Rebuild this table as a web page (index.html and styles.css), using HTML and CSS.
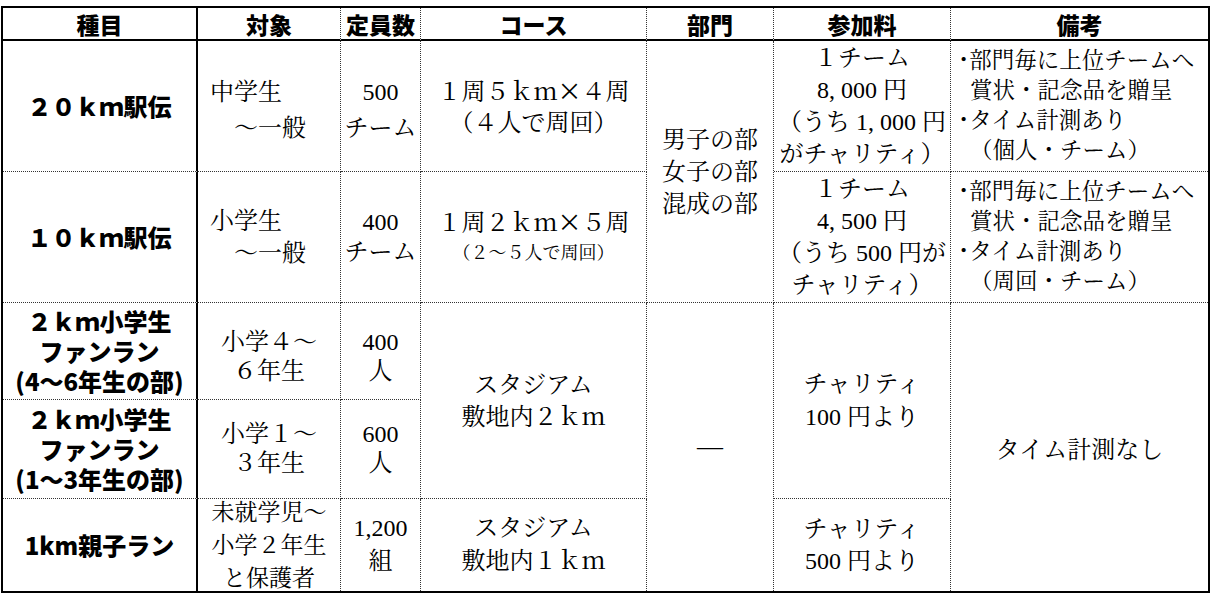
FILE: index.html
```html
<!DOCTYPE html>
<html lang="ja">
<head>
<meta charset="utf-8">
<title>種目一覧</title>
<link rel="stylesheet" href="styles.css">
</head>
<body>
<div class="grid">
  <div class="cell hd k"><div class="t">種目</div></div>
  <div class="cell hd"><div class="t">対象</div></div>
  <div class="cell hd"><div class="t">定員数</div></div>
  <div class="cell hd"><div class="t">コース</div></div>
  <div class="cell hd"><div class="t">部門</div></div>
  <div class="cell hd"><div class="t">参加料</div></div>
  <div class="cell hd last"><div class="t">備考</div></div>

  <div class="cell ev k"><div class="t">２０ｋｍ駅伝</div></div>
  <div class="cell left tall"><div class="t">中学生<br>　～一般</div></div>
  <div class="cell tall"><div class="t">500<br>チーム</div></div>
  <div class="cell lh31"><div class="t">１周５ｋｍ<span class="j">×</span>４周<br>（４人で周回）</div></div>
  <div class="cell span2"><div class="t">男子の部<br>女子の部<br>混成の部</div></div>
  <div class="cell"><div class="t">１チーム<br>8, 000 円<br>（うち 1, 000 円<br>がチャリティ）</div></div>
  <div class="cell notes last">
    <div class="item">･部門毎に上位チームへ<br>賞状・記念品を贈呈</div>
    <div class="item">･タイム計測あり<br>（個人・チーム）</div>
  </div>

  <div class="cell ev k"><div class="t">１０ｋｍ駅伝</div></div>
  <div class="cell left"><div class="t">小学生<br>　～一般</div></div>
  <div class="cell lh30"><div class="t">400<br>チーム</div></div>
  <div class="cell lh28"><div class="t">１周２ｋｍ<span class="j">×</span>５周<br><span class="small">（２～５人で周回）</span></div></div>
  <div class="cell"><div class="t">１チーム<br>4, 500 円<br>（うち 500 円が<br>チャリティ）</div></div>
  <div class="cell notes last">
    <div class="item">･部門毎に上位チームへ<br>賞状・記念品を贈呈</div>
    <div class="item">･タイム計測あり<br>（周回・チーム）</div>
  </div>

  <div class="cell ev k lh30"><div class="t">２ｋｍ小学生<br>ファンラン<br>(4～6年生の部)</div></div>
  <div class="cell lh29 down"><div class="t">小学４～<br>６年生</div></div>
  <div class="cell lh29 down"><div class="t">400<br>人</div></div>
  <div class="cell span2"><div class="t">スタジアム<br>敷地内２ｋｍ</div></div>
  <div class="cell span3 nb dash"><div class="t">—</div></div>
  <div class="cell span2 lh33"><div class="t">チャリティ<br>100 円より</div></div>
  <div class="cell span3 nb last down5"><div class="t">タイム計測なし</div></div>

  <div class="cell ev k lh30"><div class="t">２ｋｍ小学生<br>ファンラン<br>(1～3年生の部)</div></div>
  <div class="cell lh29"><div class="t">小学１～<br>３年生</div></div>
  <div class="cell lh29"><div class="t">600<br>人</div></div>

  <div class="cell ev k nb"><div class="t">1km親子ラン</div></div>
  <div class="cell nb lh33 f23"><div class="t">未就学児～<br>小学２年生<br>と保護者</div></div>
  <div class="cell nb lh33"><div class="t">1,200<br>組</div></div>
  <div class="cell nb lh33"><div class="t">スタジアム<br>敷地内１ｋｍ</div></div>
  <div class="cell nb"><div class="t">チャリティ<br>500 円より</div></div>
</div>
</body>
</html>
```

FILE: styles.css
```css
html, body {
  margin: 0;
  padding: 0;
  background: #ffffff;
}

.grid {
  margin: 6px 0 0 1px;
  width: 1209px;
  box-sizing: border-box;
  border: 2px solid #000;
  display: grid;
  grid-template-columns: 195px 143px 80px 226px 127px 177px 257px;
  grid-template-rows: 33px 131px 131px 97px 99px 92px;
}

.cell {
  border-right: 1px dotted #333;
  border-bottom: 1px dotted #333;
  display: flex;
  flex-direction: column;
  align-items: center;
  justify-content: center;
  text-align: center;
  font-family: "Liberation Serif", "Noto Serif CJK JP", "Noto Sans CJK JP", serif;
  font-size: 24px;
  font-weight: 400;
  line-height: 32px;
  color: #000;
  min-width: 0;
  min-height: 0;
  white-space: nowrap;
}

.t {
  display: block;
}

.j {
  font-family: "Noto Sans CJK JP", sans-serif;
}

.hd {
  border-bottom: 2px solid #000;
  font-family: "Noto Sans CJK JP", sans-serif;
  font-weight: 900;
  font-size: 23px;
  line-height: 30px;
}

.k {
  border-right: 2px solid #000;
}

.last {
  border-right: none;
}

.nb {
  border-bottom: none;
}

.ev {
  font-family: "Noto Sans CJK JP", sans-serif;
  font-weight: 900;
  font-size: 24px;
}

.left {
  align-items: flex-start;
  text-align: left;
  padding-left: 12px;
}

.tall {
  line-height: 36px;
  padding-top: 8px;
}

.span2 {
  grid-row: span 2;
}

.span3 {
  grid-row: span 3;
}

.lh28 { line-height: 28px; }
.lh29 { line-height: 29px; }
.lh30 { line-height: 30px; }
.lh31 { line-height: 31px; }
.lh33 { line-height: 33px; }

.f23 { font-size: 23px; }

.down {
  padding-top: 12px;
}

.down5 {
  padding-top: 6px;
}

.small {
  font-size: 18px;
}

.dash {
  font-size: 26px;
}

.notes {
  align-items: flex-start;
  text-align: left;
  padding-left: 3px;
  font-size: 22.5px;
  line-height: 30px;
}

.item {
  padding-left: 16px;
  text-indent: -12px;
}
```
